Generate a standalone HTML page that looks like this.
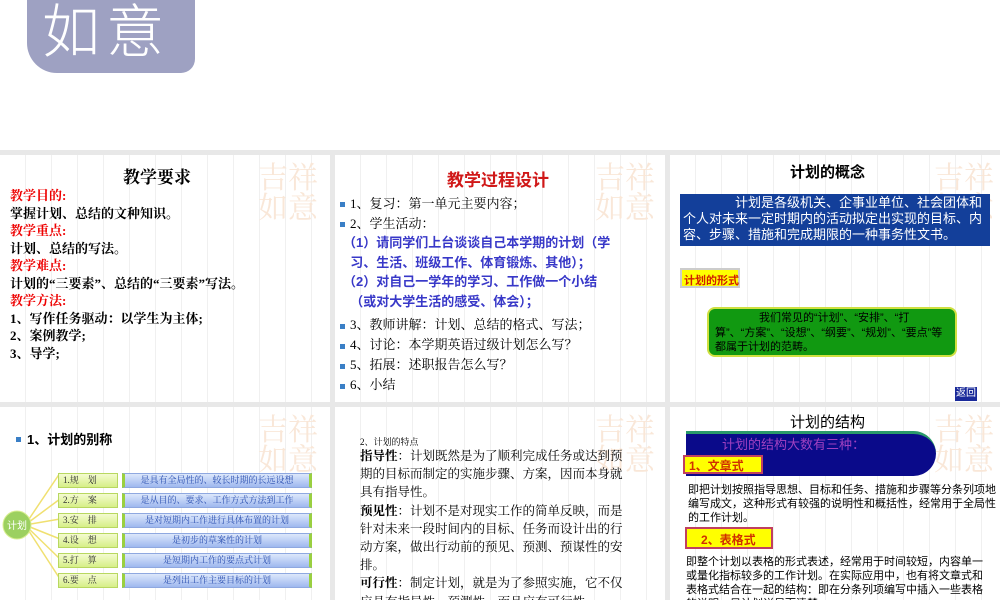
<!DOCTYPE html>
<html><head><meta charset="utf-8"><style>
*{margin:0;padding:0;box-sizing:border-box}
body{width:1000px;height:600px;overflow:hidden;background:#fff;position:relative;font-family:"Liberation Serif","Noto Serif CJK SC",serif}
.p{position:absolute;background:#fff;overflow:hidden;background-image:repeating-linear-gradient(90deg,transparent 0 25px,#f0f0f0 25px 26px)}
.a{position:absolute;white-space:nowrap}
.s{font-family:"Liberation Sans","Noto Sans CJK SC",sans-serif}
.seal{position:absolute;color:#f9e7d8;font-size:30px;line-height:30px;font-family:"Noto Serif CJK SC",serif}
.b{position:absolute;width:5px;height:5px;background:#3a7fc6}
.lab{position:absolute;left:58px;width:60px;height:15px;background:linear-gradient(#f4fbd0,#d6ef88);border:1px solid #b8d860;font-size:9px;color:#333;padding-left:4px;line-height:13px}
.bar{position:absolute;left:122px;width:190px;height:15px;background:linear-gradient(#dde8fb,#9fb8ef);border:1px solid #8fa8e0;border-left:3px solid #9ad040;border-right:3px solid #9ad040;font-size:9px;color:#2a4fb0;text-align:center;line-height:13px}
</style></head><body>
<div style="position:absolute;left:0;top:150px;width:1000px;height:450px;background:#e8e8e8"></div>
<div style="position:absolute;left:27px;top:0;width:168px;height:73px;background:#9ea1c2;border-radius:0 0 14px 30px"></div>
<div class="a" style="left:42px;top:-8px;font-size:58px;color:#fff;font-family:'Noto Sans CJK SC',sans-serif;font-weight:300;line-height:70px;letter-spacing:6px">如意</div>

<div class="p" style="left:0;top:155px;width:330px;height:247px">
<div class="seal" style="left:258px;top:5px">吉祥<br>如意</div>
<div class="a" style="left:123px;top:8px;font-size:17px;font-weight:bold">教学要求</div>
<div class="a" style="left:10px;top:32px;font-size:13px;line-height:17.5px;font-weight:bold"><span style="color:#e00">教学目的:</span><br>掌握计划、总结的文种知识。<br><span style="color:#e00">教学重点:</span><br>计划、总结的写法。<br><span style="color:#e00">教学难点:</span><br>计划的“三要素”、总结的“三要素”写法。<br><span style="color:#e00">教学方法:</span><br>1、写作任务驱动：以学生为主体;<br>2、案例教学;<br>3、导学;</div>
</div>

<div class="p" style="left:335px;top:155px;width:330px;height:247px">
<div class="seal" style="left:260px;top:5px">吉祥<br>如意</div>
<div class="a s" style="left:112px;top:11px;font-size:17px;font-weight:bold;color:#d01818">教学过程设计</div>
<div class="b" style="left:5px;top:47px"></div><div class="a" style="left:15px;top:38px;font-size:13px">1、复习：第一单元主要内容；</div>
<div class="b" style="left:5px;top:67px"></div><div class="a" style="left:15px;top:58px;font-size:13px">2、学生活动：</div>
<div class="a s" style="left:8px;top:78px;font-size:13px;line-height:19.5px;color:#3838c8;font-weight:bold">（1）请同学们上台谈谈自己本学期的计划（学<br>&nbsp;&nbsp;习、生活、班级工作、体育锻炼、其他）；<br>（2）对自己一学年的学习、工作做一个小结<br>&nbsp;&nbsp;（或对大学生活的感受、体会）；</div>
<div class="b" style="left:5px;top:169px"></div><div class="a" style="left:15px;top:159px;font-size:13px">3、教师讲解：计划、总结的格式、写法；</div>
<div class="b" style="left:5px;top:189px"></div><div class="a" style="left:15px;top:179px;font-size:13px">4、讨论：本学期英语过级计划怎么写？</div>
<div class="b" style="left:5px;top:209px"></div><div class="a" style="left:15px;top:199px;font-size:13px">5、拓展：述职报告怎么写？</div>
<div class="b" style="left:5px;top:229px"></div><div class="a" style="left:15px;top:219px;font-size:13px">6、小结</div>
</div>

<div class="p" style="left:670px;top:155px;width:330px;height:247px">
<div class="seal" style="left:264px;top:5px">吉祥<br>如意</div>
<div class="a s" style="left:120px;top:6px;font-size:15px;font-weight:bold">计划的概念</div>
<div style="position:absolute;left:10px;top:39px;width:310px;height:52px;background:#133f9a;color:#fff;font-size:13px;line-height:16px;padding:1px 3px" class="s">　　　　计划是各级机关、企事业单位、社会团体和个人对未来一定时期内的活动拟定出实现的目标、内容、步骤、措施和完成期限的一种事务性文书。</div>
<div class="a s" style="left:10px;top:113px;width:60px;height:20px;background:#ff0;border:2px solid #ccc;font-size:11px;color:#d02000;font-weight:bold;padding:2px 2px">计划的形式</div>
<div style="position:absolute;left:37px;top:152px;width:250px;height:50px;background:#119911;border:2px solid #cfe040;border-radius:8px;font-size:11px;line-height:14.5px;padding:2px 6px" class="s">　　　　我们常见的“计划”、“安排”、“打算”、“方案”、“设想”、“纲要”、“规划”、“要点”等都属于计划的范畴。</div>
<div class="a s" style="left:285px;top:232px;width:22px;height:14px;background:#1a2a9a;color:#fff;font-size:10px;line-height:14px;text-align:center">返回</div>
</div>

<div class="p" style="left:0;top:407px;width:330px;height:193px">
<div class="seal" style="left:258px;top:5px">吉祥<br>如意</div>
<div class="b" style="left:16px;top:30px"></div>
<div class="a s" style="left:27px;top:22px;font-size:13px;font-weight:bold">1、计划的别称</div>
<svg style="position:absolute;left:0;top:0" width="330" height="193"><g stroke="#f0e070" stroke-width="1.5" fill="none"><path d="M25 118 L60 66"/><path d="M25 118 L60 92"/><path d="M25 118 L60 112"/><path d="M25 118 L60 132"/><path d="M25 118 L60 152"/><path d="M25 118 L60 172"/></g><circle cx="17" cy="118" r="14" fill="#9cd060" stroke="#d8ee90"/><text x="7" y="122" font-size="10" fill="#fff" font-family="Noto Sans CJK SC">计划</text></svg>
<div class="lab" style="top:66px">1.规　划</div><div class="bar" style="top:66px">是具有全局性的、较长时期的长远设想</div>
<div class="lab" style="top:86px">2.方　案</div><div class="bar" style="top:86px">是从目的、要求、工作方式方法到工作</div>
<div class="lab" style="top:106px">3.安　排</div><div class="bar" style="top:106px">是对短期内工作进行具体布置的计划</div>
<div class="lab" style="top:126px">4.设　想</div><div class="bar" style="top:126px">是初步的草案性的计划</div>
<div class="lab" style="top:146px">5.打　算</div><div class="bar" style="top:146px">是短期内工作的要点式计划</div>
<div class="lab" style="top:166px">6.要　点</div><div class="bar" style="top:166px">是列出工作主要目标的计划</div>
</div>

<div class="p" style="left:335px;top:407px;width:330px;height:193px">
<div class="seal" style="left:260px;top:5px">吉祥<br>如意</div>
<div class="a" style="left:25px;top:28px;font-size:9px">2、计划的特点</div>
<div style="position:absolute;left:25px;top:40px;width:272px;font-size:12.5px;line-height:18.2px"><b>指导性</b>：计划既然是为了顺利完成任务或达到预期的目标而制定的实施步骤、方案，因而本身就具有指导性。<br><b>预见性</b>：计划不是对现实工作的简单反映，而是针对未来一段时间内的目标、任务而设计出的行动方案，做出行动前的预见、预测、预谋性的安排。<br><b>可行性</b>：制定计划，就是为了参照实施，它不仅应具有指导性、预测性，而且应有可行性。<br><b>约束性</b>：计划一经通过、批准，在计划所涉及的</div>
</div>

<div class="p" style="left:670px;top:407px;width:330px;height:193px">
<div class="seal" style="left:264px;top:5px">吉祥<br>如意</div>
<div class="a s" style="left:120px;top:4px;font-size:15px">计划的结构</div>
<div style="position:absolute;left:16px;top:24px;width:250px;height:45px;background:#0a0a8a;border-radius:0 60px 60px 0;border-top:3px solid #2a9a6a"></div>
<div class="a s" style="left:52px;top:27px;font-size:13px;color:#a040c0">计划的结构大数有三种：</div>
<div class="a s" style="left:13px;top:48px;width:80px;height:19px;background:#ff0;border:2px solid #c04060;color:#d03000;font-size:12px;font-weight:bold;padding-left:4px">1、文章式</div>
<div style="position:absolute;left:18px;top:76px;width:310px;font-size:11px;line-height:14px" class="s">即把计划按照指导思想、目标和任务、措施和步骤等分条列项地编写成文，这种形式有较强的说明性和概括性，经常用于全局性的工作计划。</div>
<div class="a s" style="left:15px;top:120px;width:88px;height:22px;background:#ff0;border:2px solid #c04060;color:#d03000;font-size:12px;font-weight:bold;padding:2px 0 0 14px">2、表格式</div>
<div style="position:absolute;left:16px;top:148px;width:300px;font-size:11px;line-height:14px" class="s">即整个计划以表格的形式表述，经常用于时间较短，内容单一或量化指标较多的工作计划。在实际应用中，也有将文章式和表格式结合在一起的结构：即在分条列项编写中插入一些表格的说明，是计划详尽而清楚。</div>
</div>
</body></html>
